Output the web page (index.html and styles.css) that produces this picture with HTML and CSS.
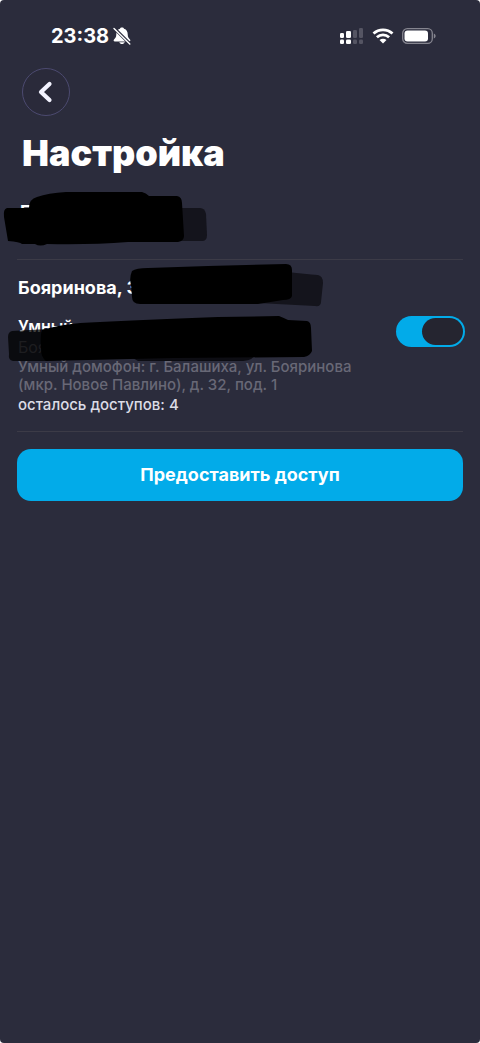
FILE: index.html
```html
<!DOCTYPE html>
<html lang="ru">

<head>
    <meta charset="UTF-8">
    <meta name="viewport" content="width=device-width, initial-scale=1.0">
    <title>Настройка</title>
    <link rel="stylesheet" href="styles.css">
</head>

<body>
    <div class="screen">
        <div class="status-bar">
            <div class="status-left">
                <span class="time">23:38</span>
                <svg class="bell" width="18" height="18" viewBox="0 0 18 18" aria-hidden="true">
                    <path d="M9 0.500C7.800 .5 7.200 1 7 1.700C4.200 2.500 3.300 4.800 3.300 7.300C3.300 10.300 2.300 11.300 1 12.500C.2 13.500 .8 14.500 1.800 14.500H16.200C17.200 14.500 17.800 13.500 17 12.500C15.700 11.300 14.700 10.300 14.700 7.300C14.700 4.800 13.800 2.500 11 1.700C10.800 1 10.200 .5 9 .5ZM6.300 15.300C7 17.700 11 17.700 11.700 15.300Z" fill="#fff"/>
                    <path d="M1 1L17 17" stroke="#2b2c3c" stroke-width="3.200"/>
                    <path d="M1 1.500L16.800 17" stroke="#fff" stroke-width="1.400" stroke-linecap="round"/>
                </svg>
            </div>
            <div class="status-right">
                <svg width="25" height="18" viewBox="0 0 25 18" aria-hidden="true">
                    <g fill="#fff">
                        <rect x="1" y="6" width="4" height="5" rx="1.300"/>
                        <rect x="7" y="4" width="5" height="7" rx="1.300"/>
                        <rect x="1" y="12.500" width="4" height="4.500" rx="1.300"/>
                        <rect x="7" y="12.500" width="5" height="4.500" rx="1.300"/>
                    </g>
                    <g fill="#555563">
                        <rect x="14" y="3" width="4" height="8" rx="1.300"/>
                        <rect x="20" y="1" width="4" height="10" rx="1.300"/>
                        <rect x="14" y="12.500" width="4" height="4.500" rx="1.300"/>
                        <rect x="20" y="12.500" width="4" height="4.500" rx="1.300"/>
                    </g>
                </svg>
                <svg width="22" height="16" viewBox="0 0 22 16" aria-hidden="true">
                    <g fill="none" stroke="#fff" stroke-width="2.800">
                        <path d="M1.500 5.600C6.800.6 15.200.6 20.500 5.600"/>
                        <path d="M4.900 9.200C8.400 6 13.600 6 17.100 9.200"/>
                    </g>
                    <path d="M7.500 11.900C9.500 10.200 12.500 10.200 14.500 11.900L11 15.500Z" fill="#fff"/>
                </svg>
                <svg width="34" height="16" viewBox="0 0 34 16" aria-hidden="true">
                    <rect x=".7" y=".7" width="29.600" height="14.600" rx="4.600" fill="none" stroke="#85858f" stroke-width="1.300"/>
                    <rect x="2.500" y="2.500" width="23.500" height="11" rx="3" fill="#fff"/>
                    <path d="M31.800 5.500C34.200 6.300 34.200 9.700 31.800 10.500Z" fill="#85858f"/>
                </svg>
            </div>
        </div>

        <header class="header">
            <button class="back" type="button" aria-label="Назад">
                <svg width="18" height="22" viewBox="0 0 18 22" aria-hidden="true">
                    <path d="M12.500 3L4 11L12.500 19" fill="none" stroke="#f3f3ff" stroke-width="4.200" stroke-linecap="round" stroke-linejoin="round"/>
                </svg>
            </button>
            <h1>Настройка</h1>
        </header>

        <main>
            <div class="account">
                <span>Г</span>
                <svg class="mark mark-account" width="208" height="56" viewBox="0 0 208 56" aria-hidden="true">
                    <path d="M170 17L200 17Q205 17 206 23L207 44Q207 50 202 50L170 50Z" fill="#14141c"/>
                    <path d="M7 17L29 17Q29 8 37 6Q48 2 66 1L142 1Q146 2 149 5L177 5Q182 6 182 12L184 45Q184 50 178 51L128 51Q90 54 47 53Q40 56 35 53L22 53Q20 51 8 50L4 26Q3 18 7 17Z" fill="#000"/>
                </svg>
            </div>

            <section class="address">
                <h2>Бояринова, 3</h2>
                <svg class="mark mark-street" width="196" height="46" viewBox="0 0 196 46" aria-hidden="true">
                    <path d="M160 9Q177 11 190 12Q195 13 195 20L193 39Q193 44 187 43L130 40Z" fill="#14141c"/>
                    <path d="M4 8Q8 5 20 5L80 3L158 1Q164 1 164 7L164 33Q163 37 155 37L130 41L12 41Q4 41 4 34L3 22Q1 15 4 8Z" fill="#000"/>
                </svg>
                <div class="device">
                    <div class="device-info">
                        <label class="device-name" for="access">Умный</label>
                        <div class="device-place">Боя</div>
                        <p class="device-desc">Умный домофон: г. Балашиха, ул. Бояринова (мкр. Новое Павлино), д. 32, под. 1</p>
                        <p class="device-left">осталось доступов: 4</p>
                    </div>
                    <input class="toggle" id="access" type="checkbox" role="switch" checked>
                    <svg class="mark mark-device" width="306" height="50" viewBox="0 0 306 50" aria-hidden="true">
                        <path d="M4 16L40 14L40 46L5 46Q0 45 1 39L0 22Q0 17 4 16Z" fill="#000" fill-opacity=".75"/>
                        <path d="M120 40L248 38Q246 45 235 46L130 46Z" fill="#0d0d13"/>
                        <path d="M34 15Q50 10 72 8Q130 5 210 2L271 1Q276 3 280 5L299 6Q303 7 303 13L304 36Q302 41 296 42L165 43L38 46Q33 42 33 34Q32 20 34 15Z" fill="#000"/>
                    </svg>
                </div>
            </section>

            <button class="grant" type="button">Предоставить доступ</button>
        </main>
    </div>
</body>

</html>
```

FILE: styles.css
```css
* {
    margin: 0;
    padding: 0;
    box-sizing: border-box;
}

body {
    font-family: Inter, "Noto Sans", sans-serif;
    background: #ffffff;
    color: #ffffff;
}

button {
    font-family: inherit;
    border: none;
    cursor: pointer;
}

.screen {
    min-height: 100vh;
    padding: 0 17px;
    background: #2b2c3c;
    border-radius: 4px;
}

.status-bar {
    display: flex;
    align-items: center;
    justify-content: space-between;
    height: 68px;
    padding: 3px 27px 0 34px;
}

.status-left {
    display: flex;
    align-items: center;
    gap: 4px;
}

.status-right {
    display: flex;
    align-items: center;
    gap: 8px;
}

.time {
    font-size: 20px;
    line-height: 24px;
    font-weight: 700;
}

.header {
    padding: 0 5px;
}

.back {
    display: flex;
    align-items: center;
    justify-content: center;
    width: 48px;
    height: 48px;
    border: 1px solid #4c4a70;
    border-radius: 50%;
    background: #2a2a3a;
}

h1 {
    margin-top: 15px;
    font-size: 36px;
    line-height: 44px;
    font-weight: 900;
}

.account {
    position: relative;
    height: 85px;
    padding: 25px 3px 0;
    border-bottom: 1px solid #3c3b47;
    font-size: 18px;
    line-height: 24px;
    font-weight: 700;
}

/* hand-drawn marker strokes over private data */
.mark {
    position: absolute;
    pointer-events: none;
}

.mark-account {
    top: 16px;
    left: -17px;
}

.address {
    position: relative;
    padding: 16px 0 16px 1px;
    border-bottom: 1px solid #3c3b47;
}

h2 {
    font-size: 18px;
    line-height: 24px;
    font-weight: 700;
}

.mark-street {
    top: 3px;
    left: 111px;
}

.device {
    position: relative;
    display: flex;
    align-items: flex-start;
    justify-content: space-between;
    gap: 24px;
    padding-top: 16px;
}

.device-info {
    flex: 1;
}

.device-name {
    display: block;
    font-size: 16px;
    line-height: 20px;
    font-weight: 600;
}

.device-place {
    font-size: 16px;
    line-height: 22px;
    color: #73737f;
}

.device-desc {
    font-size: 15px;
    line-height: 18px;
    font-weight: 500;
    color: #686876;
}

.device-left {
    font-size: 15px;
    line-height: 21px;
    font-weight: 500;
    color: #dcdce6;
}

.mark-device {
    top: 15px;
    left: -10px;
}

.toggle {
    appearance: none;
    display: flex;
    flex-shrink: 0;
    width: 69px;
    height: 31px;
    margin-right: -2px;
    padding: 2px;
    border-radius: 16px;
    background: #4b4b5a;
    cursor: pointer;
}

.toggle::before {
    content: '';
    width: 41px;
    height: 27px;
    border-radius: 14px;
    background: #252530;
}

.toggle:checked {
    justify-content: flex-end;
    background: #02abe9;
}

.grant {
    width: 100%;
    height: 52px;
    margin-top: 17px;
    border-radius: 14px;
    background: #02abe9;
    color: #ffffff;
    font-size: 18px;
    line-height: 24px;
    font-weight: 700;
}
```
